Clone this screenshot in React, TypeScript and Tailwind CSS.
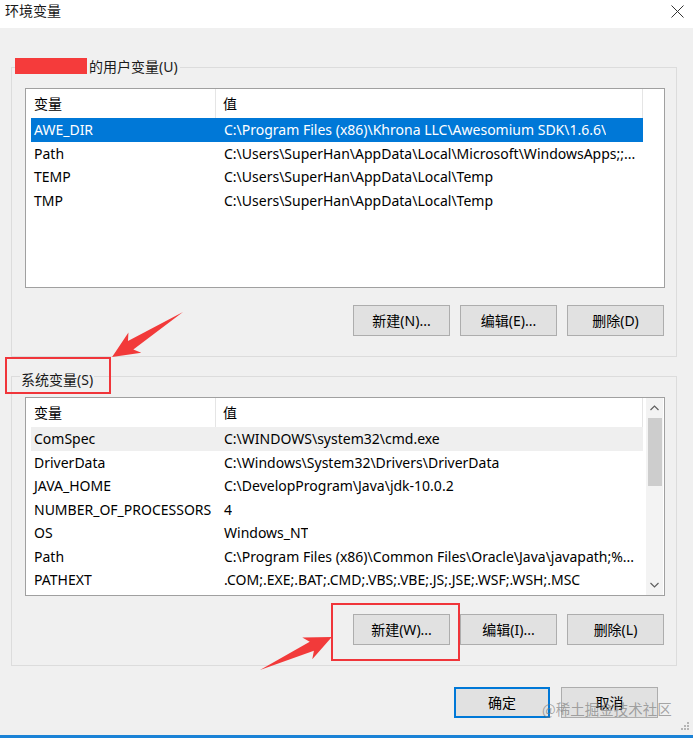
import React from "react";

const FONT = { fontFamily: '"Noto Sans", "Noto Sans CJK SC", sans-serif' };

type Row = { name: string; value: string; state?: "sel" | "hover" };

const userRows: Row[] = [
  { name: "AWE_DIR", value: "C:\\Program Files (x86)\\Khrona LLC\\Awesomium SDK\\1.6.6\\", state: "sel" },
  { name: "Path", value: "C:\\Users\\SuperHan\\AppData\\Local\\Microsoft\\WindowsApps;;..." },
  { name: "TEMP", value: "C:\\Users\\SuperHan\\AppData\\Local\\Temp" },
  { name: "TMP", value: "C:\\Users\\SuperHan\\AppData\\Local\\Temp" },
];

const sysRows: Row[] = [
  { name: "ComSpec", value: "C:\\WINDOWS\\system32\\cmd.exe", state: "hover" },
  { name: "DriverData", value: "C:\\Windows\\System32\\Drivers\\DriverData" },
  { name: "JAVA_HOME", value: "C:\\DevelopProgram\\Java\\jdk-10.0.2" },
  { name: "NUMBER_OF_PROCESSORS", value: "4" },
  { name: "OS", value: "Windows_NT" },
  { name: "Path", value: "C:\\Program Files (x86)\\Common Files\\Oracle\\Java\\javapath;%..." },
  { name: "PATHEXT", value: ".COM;.EXE;.BAT;.CMD;.VBS;.VBE;.JS;.JSE;.WSF;.WSH;.MSC" },
];

function Chevron({ up }: { up?: boolean }) {
  return (
    <svg width="9" height="6" viewBox="0 0 9 6">
      <path
        d={up ? "M0.5 5 L4.5 1 L8.5 5" : "M0.5 1 L4.5 5 L8.5 1"}
        fill="none"
        stroke="#606060"
        strokeWidth="1.2"
      />
    </svg>
  );
}

function VarList({ rows, height, scroll }: { rows: Row[]; height: string; scroll?: boolean }) {
  return (
    <div className={`ml-[13px] w-[640px] ${height} border border-[#a0a0a0] bg-white flex`}>
      <div className="w-[618px] flex flex-col">
        <div className="h-[29px] flex items-center pl-[5px] text-[14px] text-black">
          <div className="w-[185px] h-full flex items-center pl-[3px] border-r border-[#e5e5e5]">变量</div>
          <div className="w-[427px] h-full flex items-center pl-[7px] border-r border-[#e5e5e5]">值</div>
        </div>
        {rows.map((r) => (
          <div
            key={r.name + r.value}
            className={`ml-[5px] w-[612px] h-[23.5px] flex items-center text-[14px] whitespace-nowrap ${
              r.state === "sel"
                ? "bg-[#0078d7] text-white"
                : r.state === "hover"
                ? "bg-[#efefef] text-black"
                : "text-black"
            }`}
          >
            <div className="w-[185px] pl-[3px] overflow-hidden">{r.name}</div>
            <div className="pl-[8px] overflow-hidden">{r.value}</div>
          </div>
        ))}
      </div>
      {scroll && (
        <div className="ml-[2px] w-[17px] h-full bg-[#f3f3f3] flex flex-col items-center">
          <div className="h-[20px] w-full flex items-center justify-center">
            <Chevron up />
          </div>
          <div className="w-[14px] h-[68px] bg-[#cdcdcd]" />
          <div className="flex-1" />
          <div className="h-[20px] w-full flex items-center justify-center">
            <Chevron />
          </div>
        </div>
      )}
    </div>
  );
}

function Btn({ label, primary, w = "w-[97px]" }: { label: string; primary?: boolean; w?: string }) {
  return (
    <div
      className={`${w} h-[31px] flex items-center justify-center text-[14px] text-black bg-[#e1e1e1] ${
        primary ? "border-2 border-[#0078d7]" : "border border-[#adadad]"
      }`}
    >
      {label}
    </div>
  );
}

function ButtonRow({ labels }: { labels: string[] }) {
  return (
    <div className="flex justify-end gap-[10px] pr-[12px]">
      {labels.map((l) => (
        <Btn key={l} label={l} />
      ))}
    </div>
  );
}

function Arrow({ x, y, angle, len }: { x: number; y: number; angle: number; len: number }) {
  const L = len;
  const pts = [
    [0, 0],
    [L - 22, -5],
    [L - 27, -12],
    [L, 0],
    [L - 27, 12],
    [L - 22, 5],
  ]
    .map((p) => p.join(","))
    .join(" ");
  return <polygon points={pts} fill="#f23a3a" transform={`translate(${x},${y}) rotate(${angle})`} />;
}

export default function App() {
  return (
    <div className="relative w-[693px] h-[738px] bg-[#f0f0f0] overflow-hidden flex flex-col" style={FONT}>
      {/* title bar */}
      <div className="h-[28px] bg-white flex items-start justify-between pl-[5px] pr-[9px]">
        <span className="mt-[2px] text-[14px] leading-[18px] text-[#1a1a1a]">环境变量</span>
        <svg className="mt-[5px]" width="13" height="13" viewBox="0 0 13 13">
          <path d="M0.5 0.5 L12.5 12.5 M12.5 0.5 L0.5 12.5" stroke="#333" strokeWidth="1" fill="none" />
        </svg>
      </div>

      <div className="pl-[11px] pr-[16px]">
        {/* user variables */}
        <div className="relative mt-[39px] h-[290px] border border-[#dcdcdc]">
          <div className="absolute left-[3px] top-[-10px] flex items-center bg-[#f0f0f0] pr-[2px]">
            <div className="w-[72px] h-[16px] bg-[#f53b3b] -mt-[2px]" />
            <span className="ml-[2px] text-[14px] leading-[18px] text-[#1a1a1a]">的用户变量(U)</span>
          </div>
          <div className="mt-[20px]">
            <VarList rows={userRows} height="h-[200px]" />
          </div>
          <div className="mt-[17px]">
            <ButtonRow labels={["新建(N)...", "编辑(E)...", "删除(D)"]} />
          </div>
        </div>

        {/* system variables */}
        <div className="relative mt-[19px] h-[290px] border border-[#dcdcdc]">
          <div className="absolute left-[8px] top-[-10px] bg-[#f0f0f0] px-[1px]">
            <span className="text-[14px] leading-[18px] text-[#1a1a1a]">系统变量(S)</span>
          </div>
          <div className="mt-[20px]">
            <VarList rows={sysRows} height="h-[199px]" scroll />
          </div>
          <div className="mt-[18px]">
            <ButtonRow labels={["新建(W)...", "编辑(I)...", "删除(L)"]} />
          </div>
        </div>
      </div>

      {/* OK / Cancel */}
      <div className="mt-[21px] flex justify-end gap-[11px] pr-[35px]">
        <Btn label="确定" primary w="w-[96px]" />
        <Btn label="取消" />
      </div>

      <div className="mt-auto h-[3px] bg-[#1a82d6]" />

      {/* annotations overlay */}
      <div className="absolute left-[5px] top-[357px] w-[106px] h-[37px] border-2 border-[#f0353a]" />
      <div className="absolute left-[331px] top-[603px] w-[129px] h-[58px] border-2 border-[#f0353a]" />
      <svg className="absolute left-0 top-0 pointer-events-none" width="693" height="738">
        <Arrow x={183} y={312} angle={147.6} len={84} />
        <Arrow x={260} y={670} angle={-24.6} len={79} />
        <g fill="#b5b5b5">
          <rect x="687" y="722" width="2" height="2" />
          <rect x="684" y="725" width="2" height="2" />
          <rect x="687" y="725" width="2" height="2" />
          <rect x="681" y="728" width="2" height="2" />
          <rect x="684" y="728" width="2" height="2" />
          <rect x="687" y="728" width="2" height="2" />
        </g>
      </svg>
      <div
        className="absolute left-[542px] top-[699px] text-[14.5px] leading-[20px] text-[rgba(120,120,120,0.65)] whitespace-nowrap"
        style={{ fontFamily: '"Noto Sans CJK SC", sans-serif' }}
      >
        @稀土掘金技术社区
      </div>
    </div>
  );
}
